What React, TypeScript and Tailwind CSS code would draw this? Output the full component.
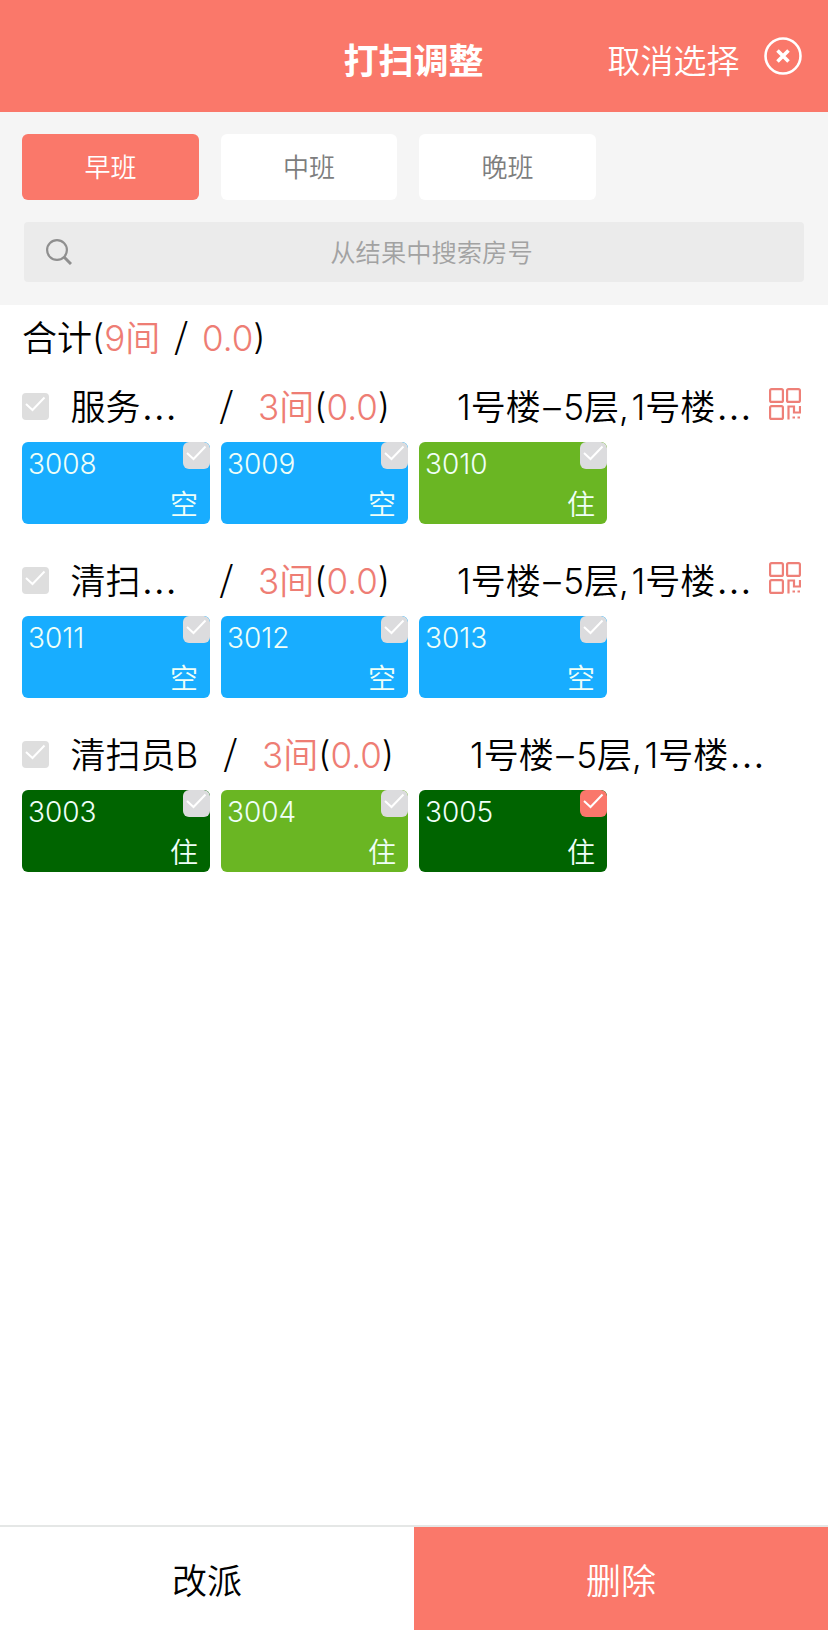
import React from "react";

type Room = { no: string; status: string; color: string; checked?: boolean };
type Group = { name: string; short: boolean; rooms: Room[] };

const BLUE = "bg-[#18adff]";
const LIME = "bg-[#6ab623]";
const GREEN = "bg-[#006400]";

const groups: Group[] = [
  {
    name: "服务",
    short: true,
    rooms: [
      { no: "3008", status: "空", color: BLUE },
      { no: "3009", status: "空", color: BLUE },
      { no: "3010", status: "住", color: LIME },
    ],
  },
  {
    name: "清扫",
    short: true,
    rooms: [
      { no: "3011", status: "空", color: BLUE },
      { no: "3012", status: "空", color: BLUE },
      { no: "3013", status: "空", color: BLUE },
    ],
  },
  {
    name: "清扫员B",
    short: false,
    rooms: [
      { no: "3003", status: "住", color: GREEN },
      { no: "3004", status: "住", color: LIME },
      { no: "3005", status: "住", color: GREEN, checked: true },
    ],
  },
];

function CheckMark({ className }: { className: string }) {
  return (
    <svg viewBox="0 0 27 27" className={className} fill="none" stroke="#fff" strokeWidth="2">
      <path d="M4 11 L10.5 17 L22.5 4.5" />
    </svg>
  );
}

function QrIcon() {
  return (
    <svg viewBox="0 0 32 32" className="mb-[4px] h-8 w-8" fill="none" stroke="#ee8078" strokeWidth="2.200">
      <rect x="1.100" y="1.100" width="12.800" height="12.800" rx="1.5" />
      <rect x="18.100" y="1.100" width="12.800" height="12.800" rx="1.5" />
      <rect x="1.100" y="18.100" width="12.800" height="12.800" rx="1.5" />
      <path d="M19.500 31.500V18.500H25V24.500H31V18M23.500 29.500h2.500M28.500 29.500h2.500" />
    </svg>
  );
}

function Ellipsis() {
  return <span className="ml-[1px] text-[42px] leading-[0]">…</span>;
}

function Slash() {
  return <span className="inline-block -translate-y-[2px] font-['Noto_Sans_CJK_SC',sans-serif] leading-[0]">/</span>;
}

function Tile({ room }: { room: Room }) {
  return (
    <div className={`relative h-[82px] overflow-hidden rounded-[6px] text-[#effff8] ${room.color}`}>
      <div className="pl-[6px] pt-[4px] text-[28px] leading-[36px]">{room.no}</div>
      <div className="absolute bottom-[1px] right-[12px] text-[28px] leading-[36px]">{room.status}</div>
      <div className={`absolute right-0 top-0 h-[27px] w-[27px] rounded-[6px] ${room.checked ? "bg-[#fa776b]" : "bg-[#dcdcde]"}`}>
        <CheckMark className="h-[27px] w-[27px]" />
      </div>
    </div>
  );
}

function GroupBlock({ group }: { group: Group }) {
  return (
    <section className="h-[174px]">
      <div className="flex h-[72px] items-center whitespace-nowrap pl-[22px] text-[35px] leading-[52px] text-black">
        <div className="h-[27px] w-[27px] shrink-0 rounded-[4px] bg-[#dedede]">
          <CheckMark className="h-[27px] w-[27px]" />
        </div>
        <div className={`ml-[21.500px] shrink-0 pt-[2px] ${group.short ? "w-[149px]" : "w-[153px]"}`}>
          {group.name}
          {group.short && <Ellipsis />}
        </div>
        <div className="w-[38.500px] shrink-0 pt-[2px]">
          <Slash />
        </div>
        <div className={`shrink-0 pt-[1px] ${group.short ? "w-[199px]" : "w-[208px]"}`}>
          <span className="text-[#ee7d74]">3间</span>(<span className="text-[#ee7d74]">0.0</span>)
        </div>
        <div className="w-[312px] shrink-0 pt-[2px]">
          1号楼<span className="mx-[2.500px]">–</span>5层<span className="mr-[2.500px]">,</span>1号楼
          <Ellipsis />
        </div>
        {group.short && <QrIcon />}
      </div>
      <div className="grid grid-cols-[188px_187px_188px] gap-x-[11px] pl-[22px]">
        {group.rooms.map((room) => (
          <Tile key={room.no} room={room} />
        ))}
      </div>
    </section>
  );
}

export default function App() {
  return (
    <div className="flex h-[1630px] w-[828px] flex-col bg-white font-['Inter','Noto_Sans_CJK_SC',sans-serif] font-[350]">
      <header className="grid h-[112px] grid-cols-3 items-center bg-[#fa786a] text-white">
        <div />
        <h1 className="pr-px pt-[9px] text-center text-[35px] font-bold leading-[52px]">打扫调整</h1>
        <div className="flex items-center justify-end pr-[26px]">
          <span className="pt-[10px] text-[33px] leading-[52px]">取消选择</span>
          <svg viewBox="0 0 38 38" className="ml-[24.500px] h-[38px] w-[38px]" fill="none" stroke="#fff" strokeWidth="2.600">
            <circle cx="19" cy="19" r="17.500" />
            <path strokeWidth="3.600" d="M13.500 13.500 L24.500 24.500 M24.500 13.500 L13.500 24.500" />
          </svg>
        </div>
      </header>

      <div className="h-[193px] bg-[#f5f5f5] pt-[22px]">
        <div className="flex gap-[22px] pl-[22px] text-[26px] leading-[68px] text-[#7d7d7d]">
          <div className="h-[66px] w-[177px] rounded-[6px] bg-[#fa786a] text-center text-white">早班</div>
          <div className="h-[66px] w-[176px] rounded-[6px] bg-white text-center">中班</div>
          <div className="h-[66px] w-[177px] rounded-[6px] bg-white text-center">晚班</div>
        </div>
        <div className="mx-6 mt-[22px] flex h-[60px] items-center rounded-[4px] bg-[#ebebeb] pl-[22px]">
          <svg viewBox="0 0 26 26" className="h-[26px] w-[26px]" fill="none" stroke="#8f8f8f" strokeWidth="2.200">
            <circle cx="11" cy="11" r="9.900" />
            <path strokeWidth="3" d="M18 18 L25 25" />
          </svg>
          <div className="flex-1 pr-[13px] pt-[2px] text-center text-[25.300px] leading-[36px] text-[#a2a2a2]">从结果中搜索房号</div>
        </div>
      </div>

      <main className="flex-1">
        <div className="h-[65px] whitespace-pre pl-[22px] text-[35px] leading-[66px] text-black">
          合计(<span className="text-[#ee7d74]">9间</span>
          <span className="ml-[14px] mr-[14px]">
            <Slash />
          </span>
          <span className="text-[#ee7d74]">0.0</span>)
        </div>
        {groups.map((group) => (
          <GroupBlock key={group.name} group={group} />
        ))}
      </main>

      <footer className="grid h-[105px] grid-cols-2 border-t-2 border-[#e5e7e6] text-center text-[35px] leading-[109px]">
        <div className="text-black">改派</div>
        <div className="bg-[#fa786a] text-white">删除</div>
      </footer>
    </div>
  );
}
